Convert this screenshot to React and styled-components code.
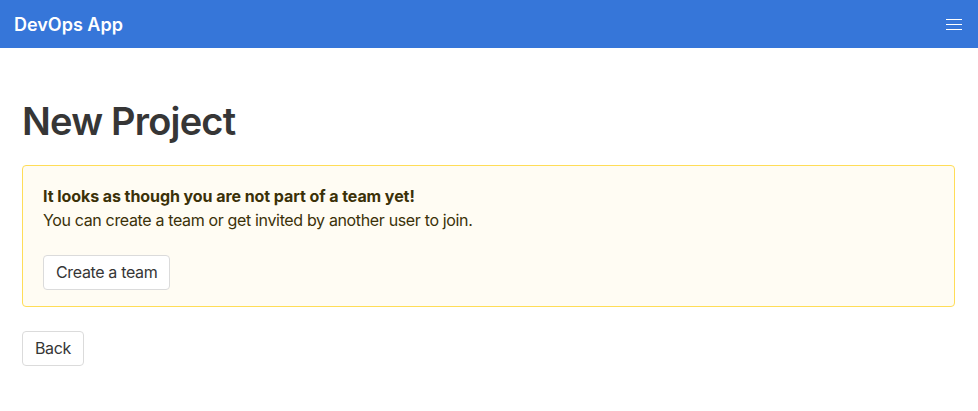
import React from 'react';
import styled, { createGlobalStyle } from 'styled-components';

const GlobalStyle = createGlobalStyle`
  body {
    margin: 0;
    background: #ffffff;
    font-family: "Inter", "Noto Sans", sans-serif;
    color: #363636;
  }
`;

const NavBar = styled.nav`
  display: flex;
  align-items: center;
  justify-content: space-between;
  height: 48px;
  padding: 0 14px;
  background-color: #3676d9;
`;

const Brand = styled.a`
  color: #ffffff;
  font-size: 18px;
  font-weight: 600;
  text-decoration: none;
`;

const Burger = styled.button`
  display: flex;
  flex-direction: column;
  gap: 4px;
  padding: 0;
  margin-right: 2px;
  background: none;
  border: none;
  cursor: pointer;

  span {
    display: block;
    width: 16px;
    height: 1px;
    background: #ffffff;
  }
`;

const Container = styled.main`
  padding: 52px 23px 0 22px;
`;

const Title = styled.h1`
  margin: 0 0 22px;
  font-size: 38px;
  font-weight: 600;
  line-height: 1.125;
  letter-spacing: -0.8px;
  color: #363636;
`;

const Notice = styled.div`
  background-color: #fffcf3;
  border: 1px solid #ffdd57;
  border-radius: 4px;
  padding: 18px 20px 16px;
  color: #3b3108;
  font-size: 16px;
  line-height: 1.5;
  letter-spacing: -0.35px;
`;

const NoticeTitle = styled.p`
  margin: 0;
  font-weight: 700;
  letter-spacing: -0.07px;
`;

const NoticeText = styled.p`
  margin: 0 0 23px;
`;

const Button = styled.button`
  display: inline-flex;
  align-items: center;
  height: 35px;
  padding: 0 12px;
  background: #ffffff;
  border: 1px solid #dbdbdb;
  border-radius: 4px;
  color: #363636;
  font-family: inherit;
  font-size: 16px;
  letter-spacing: -0.35px;
  cursor: pointer;
`;

const Actions = styled.div`
  margin-top: 24px;
`;

export default function App() {
  return (
    <>
      <GlobalStyle />
      <NavBar>
        <Brand href="#">DevOps App</Brand>
        <Burger aria-label="menu">
          <span />
          <span />
          <span />
        </Burger>
      </NavBar>
      <Container>
        <Title>New Project</Title>
        <Notice>
          <NoticeTitle>It looks as though you are not part of a team yet!</NoticeTitle>
          <NoticeText>You can create a team or get invited by another user to join.</NoticeText>
          <Button>Create a team</Button>
        </Notice>
        <Actions>
          <Button>Back</Button>
        </Actions>
      </Container>
    </>
  );
}
